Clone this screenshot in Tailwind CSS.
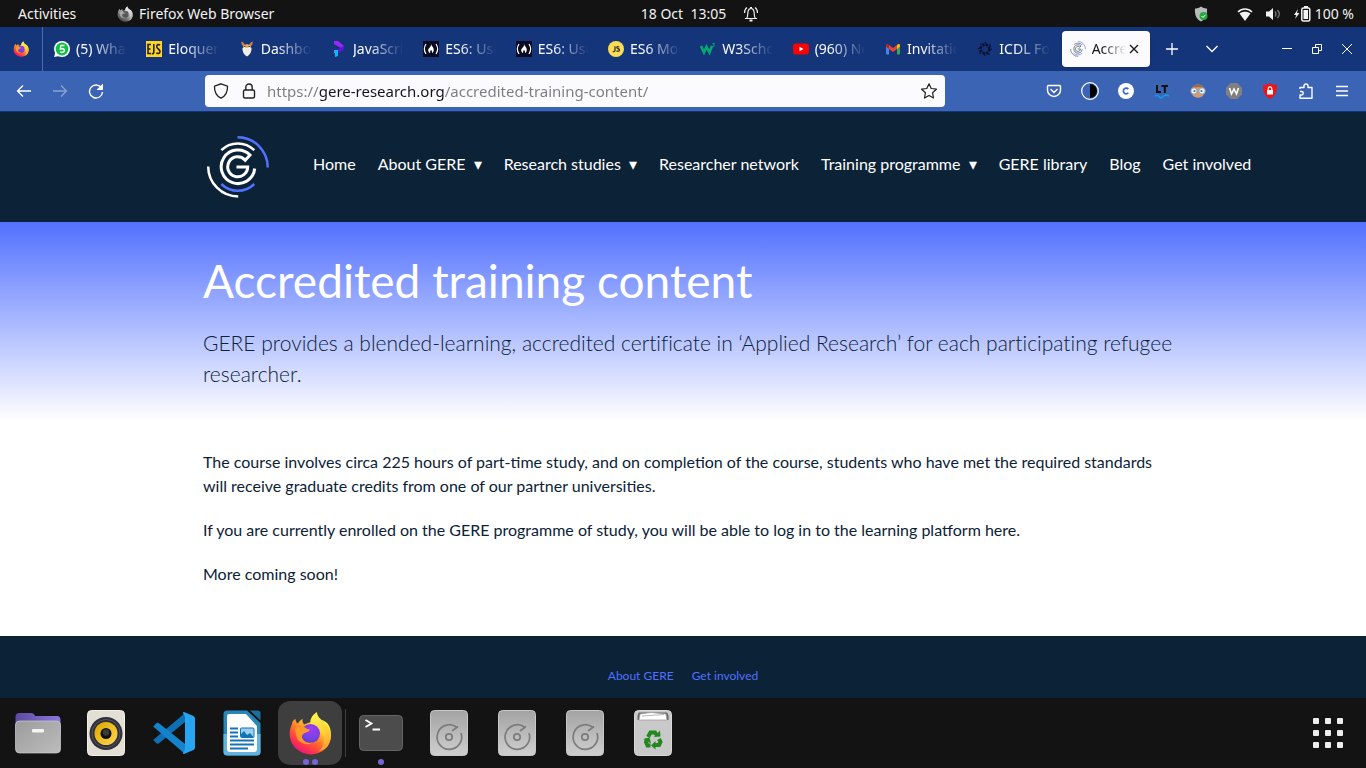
<!DOCTYPE html>
<html lang="en">
<head>
<meta charset="utf-8">
<title>Accredited training content</title>
<script src="https://cdn.jsdelivr.net/npm/@tailwindcss/browser@4"></script>
</head>
<body class="flex min-h-screen flex-col overflow-x-hidden bg-white font-['Noto_Sans',sans-serif]">

<svg class="absolute size-0" aria-hidden="true">
  <defs>
    <linearGradient id="ffBody" x1=".85" y1=".1" x2=".2" y2=".95"><stop offset="0" stop-color="#fff44f"/><stop offset=".3" stop-color="#ffb52e"/><stop offset=".55" stop-color="#ff6a2c"/><stop offset=".8" stop-color="#ff2f4e"/><stop offset="1" stop-color="#e31587"/></linearGradient>
    <linearGradient id="ffTail" x1=".4" y1="0" x2=".6" y2="1"><stop offset="0" stop-color="#fff44f"/><stop offset=".5" stop-color="#ffd338"/><stop offset="1" stop-color="#ff9a2e"/></linearGradient>
    <radialGradient id="ffGlobe" cx=".55" cy=".3" r=".8"><stop offset="0" stop-color="#a43bf0"/><stop offset=".6" stop-color="#7542e5"/><stop offset="1" stop-color="#5b3bbd"/></radialGradient>
    <linearGradient id="drive" x1="0" y1="0" x2="0" y2="1"><stop offset="0" stop-color="#a3a3a3"/><stop offset="1" stop-color="#cfcfcf"/></linearGradient>
    <linearGradient id="folderBack" x1="0" y1="0" x2="1" y2="0"><stop offset="0" stop-color="#5d4aa0"/><stop offset="1" stop-color="#8c78dc"/></linearGradient>
    <linearGradient id="folderFront" x1="0" y1="0" x2="1" y2="1"><stop offset="0" stop-color="#9c9c9c"/><stop offset="1" stop-color="#bcbcbc"/></linearGradient>
    <linearGradient id="cone" x1="0" y1="0" x2="1" y2="1"><stop offset="0" stop-color="#d9a400"/><stop offset=".5" stop-color="#efc023"/><stop offset="1" stop-color="#ffd65a"/></linearGradient>
  </defs>
  <symbol id="firefox" viewBox="0 0 44 44">
    <path fill="url(#ffBody)" d="M4 13C4 10.500 5.500 9 7.500 8c0 2 .8 3.500 2.500 4.500 1-2 2.500-3.500 4.500-4.500-.3 2 .3 4 1.500 5.500L28 9c7-1 12 2 14 8 2.500 8 .5 15.500-5 21-8 7.500-21 7-28.500 0C1 31 0 21 4 13z"/>
    <path fill="url(#ffTail)" d="M29 1c0 4 3 6.500 6.500 9.500 8 7 9.500 17 4 25-2 2.500-6 4.500-9 5 5-4 6.500-10 4.500-15-2-6-7-8-11.500-11.500C20.500 10 24 4 29 1z"/>
    <circle cx="22.500" cy="22.500" r="9.500" fill="url(#ffGlobe)"/>
    <path fill="#ff9a2a" d="M7 17c4-1.500 7-1.500 9-1 2 1 3 2.500 6 2.500-.5 2-3.500 3-5.500 3.500-2 1.500-3 2.500-2.500 5 1.500 4 6 6 10.500 4.500C20 35 12 33 9 27c-1-3-2-7-2-10z"/>
  </symbol>
  <symbol id="drive-disk" viewBox="0 0 38 46">
    <rect x=".5" y=".5" width="37" height="45" rx="4" fill="url(#drive)" stroke="#c9c6c8"/>
    <g fill="none" stroke="#7c7c7c" stroke-width="1.700"><path d="M26.500 17a12.300 12.300 0 1 0 4.500 6M22 21l6-4.500"/><circle cx="19" cy="27" r="3.200"/></g>
  </symbol>
  <symbol id="fcc" viewBox="0 0 16 16"><path fill="#0a0a23" d="M0 0h16v16H0z"/><path d="M3 3Q-.3 8 3 13M13 3q3.300 5 0 10" fill="none" stroke="#fff" stroke-width="1.200"/><path fill="#fff" d="M8 3c.4 2 3 3.500 2.800 6-.2 2-1.300 3-1.800 3 .3-1.500-.5-3-1-3-.8.500-1 2-.8 3C6 12 4.800 10 5.300 8.500 5.700 7 8.300 6 8 3z"/></symbol>
  <symbol id="gere" viewBox="0 0 64 64">
    <g fill="none" stroke-width="2.500"><path stroke="#5271ff" d="M31.500 2.200A30 30 0 0 1 61.700 32.500M15.300 49a23.500 23.500 0 0 0 33 0"/><path stroke="currentColor" d="M2.200 31.500a30 30 0 0 0 30 30M15.300 15.200a23.500 23.500 0 0 1 33 0"/></g>
    <path fill="none" stroke="currentColor" stroke-width="3" d="M48.700 33.500A16.800 16.800 0 1 1 44 20l-4.800 5.200A10 10 0 1 0 41.700 32H30.500"/>
  </symbol>
</svg>

<!-- Desktop top bar -->
<div class="flex h-[27px] items-center bg-[#131313] text-sm text-[#f2f2f2]">
  <div class="flex flex-1 items-center pl-[18px]">
    <button class="w-[99px] text-left">Activities</button>
    <button class="flex items-center gap-[6px]"><svg class="size-4 grayscale"><use href="#firefox"/></svg>Firefox Web Browser</button>
  </div>
  <div class="flex items-center gap-[17px] pl-7">
    <button class="whitespace-pre">18 Oct  13:05</button>
    <button aria-label="Notifications"><svg class="size-4" viewBox="0 0 16 16" fill="none" stroke="#f2f2f2" stroke-width="1.200"><path d="M3.500 12.500c1.500-1 1-4 1.500-7C5.400 3.500 6.500 2.500 8 2.500s2.600 1 3 3c.5 3 0 6 1.500 7zM2 12.500h12M1.500 7c0-2.500 1-4.500 2.500-5.500M14.500 7c0-2.500-1-4.500-2.500-5.500M7 1.500h2"/><path d="M6.500 14.500h3" stroke-width="2"/></svg></button>
  </div>
  <div class="flex flex-1 items-center justify-end pr-3">
    <svg class="mr-7 size-4" viewBox="0 0 16 16"><path fill="#b9bdc0" d="M8 .5c2 1.500 4 2 6 2C14.500 8 13 13 8 15.500 3 13 1.500 8 2 2.500c2 0 4-.5 6-2z"/><circle cx="10.500" cy="10" r="4" fill="#28a745"/><path d="M8.500 10l1.500 1.500 2.500-2.700" stroke="#fff" fill="none"/></svg>
    <svg class="mr-3 size-4" viewBox="0 0 16 16"><path fill="#f2f2f2" d="M8 15L2.500 7.500C5.500 5 10.500 5 13.500 7.500z"/><path d="M1 6c4-4 10-4 14 0" fill="none" stroke="#f2f2f2" stroke-width="1.600"/></svg>
    <svg class="mr-3 size-4" viewBox="0 0 16 16"><path fill="#f2f2f2" d="M1 5.500h3L8 2v12l-4-3.500H1z"/><path d="M10 5.500q2 2.500 0 5M12.500 4q3.500 4 0 8" fill="none" stroke="#777" stroke-width="1.300"/></svg>
    <svg class="mr-1 h-4 w-[18px]" viewBox="0 0 18 16"><path fill="#f2f2f2" d="M5 3L1 9h2.300L2 13l4.500-6H4z"/><rect x="8.800" y="2" width="8" height="13" rx="1.500" fill="none" stroke="#f2f2f2" stroke-width="1.500"/><path fill="#f2f2f2" d="M11 0h4v2h-4zM10.500 4h4.500v9h-4.500z"/></svg>
    <span>100 %</span>
  </div>
</div>

<!-- Tab strip -->
<div class="flex h-11 items-center bg-[#15357b] text-sm text-[#fbfbfe]">
  <button class="flex h-11 w-[43px] items-center justify-center border-r border-[#506aa6]" aria-label="Firefox View"><svg class="size-4"><use href="#firefox"/></svg></button>
  <div class="grid min-w-0 flex-1 grid-cols-12 pl-px">
    <button class="flex h-9 items-center gap-[6px] px-[10px]"><svg class="size-4 shrink-0" viewBox="0 0 16 16"><circle cx="8" cy="8" r="8" fill="#fff"/><path fill="#fff" d="M0 16l1.500-5 4 4z"/><circle cx="8" cy="8" r="6.400" fill="#0fc143"/><path d="M10.500 4.500H6.800L6.400 8c3-.8 4.300.3 4 1.700-.3 1.800-2.900 2-4.400 1.300" fill="none" stroke="#fff" stroke-width="1.500"/></svg><span class="flex-1 overflow-hidden text-left whitespace-nowrap mask-r-from-30% mask-r-to-100%">(5) WhatsApp</span></button>
    <button class="flex h-9 items-center gap-[6px] px-[10px]"><svg class="size-4 shrink-0" viewBox="0 0 16 16"><path fill="#ffd42a" d="M0 0h16v16H0z"/><path d="M5 3.500H2v9h3M2 8h2.500M7.800 3v8.500q-.2 1.500-2 1M14 4.200c-1-1-3.300-.9-3.300 1.300C10.700 8 14 8 14 10.500c0 2.200-2.500 2.500-3.600 1.300" fill="none" stroke="#222" stroke-width="1.600"/></svg><span class="flex-1 overflow-hidden text-left whitespace-nowrap mask-r-from-30% mask-r-to-100%">Eloquent</span></button>
    <button class="flex h-9 items-center gap-[6px] px-[10px]"><svg class="size-4 shrink-0" viewBox="0 0 16 16"><path d="M4.500 5C2.500 4.500 2 2.500 2.500.5 4 1 5.500 2.500 6 4zM11.500 5c2-.5 2.500-2.500 2-4.500C12 1 10.500 2.500 10 4z" fill="#c88442"/><path fill="#e8a75b" d="M4 4.500L8 3l4 1.500-.5 4h-7z"/><path fill="#f1eee6" d="M3.500 7l2-1L8 7l2.500-1 2 1c.3 3.500-1.500 7-4.500 8.500C5 14 3.200 10.500 3.500 7z"/><path fill="#66422b" d="M5 5h1.500v1H5zM9.500 5H11v1H9.500z"/></svg><span class="flex-1 overflow-hidden text-left whitespace-nowrap mask-r-from-30% mask-r-to-100%">Dashboard</span></button>
    <button class="flex h-9 items-center gap-[6px] px-[10px]"><svg class="size-4 shrink-0" viewBox="0 0 16 16"><path fill="#9b28fa" d="M3 0h4l6 5-3 2-7-4z"/><path fill="#6512e0" d="M13 5v3l-5 4-5-1V9l5-1z"/><path fill="#12b5ee" d="M3 9h4v3H3zM4 12l3-1v4l-3 1z"/></svg><span class="flex-1 overflow-hidden text-left whitespace-nowrap mask-r-from-30% mask-r-to-100%">JavaScript</span></button>
    <button class="flex h-9 items-center gap-[6px] px-[10px]"><svg class="size-4 shrink-0"><use href="#fcc"/></svg><span class="flex-1 overflow-hidden text-left whitespace-nowrap mask-r-from-30% mask-r-to-100%">ES6: Use</span></button>
    <button class="flex h-9 items-center gap-[6px] px-[10px]"><svg class="size-4 shrink-0"><use href="#fcc"/></svg><span class="flex-1 overflow-hidden text-left whitespace-nowrap mask-r-from-30% mask-r-to-100%">ES6: Use</span></button>
    <button class="flex h-9 items-center gap-[6px] px-[10px]"><svg class="size-4 shrink-0" viewBox="0 0 16 16"><circle cx="8" cy="8" r="8" fill="#fbdc55"/><path d="M7 5.200v4.300q-.2 1.500-2.200.8M11.300 6q-2.500-1-2.500.4c0 1.400 2.700 1 2.700 2.600 0 1.500-2 1.500-3 .8" fill="none" stroke="#333" stroke-width="1.300"/></svg><span class="flex-1 overflow-hidden text-left whitespace-nowrap mask-r-from-30% mask-r-to-100%">ES6 Modules</span></button>
    <button class="flex h-9 items-center gap-[6px] px-[10px]"><svg class="size-4 shrink-0" viewBox="0 0 16 16" fill="none" stroke="#04aa6d"><path stroke-width="2.600" d="M1 5l3 6.500L6.500 6l3 5.500L12 5"/><path d="M12.500 2.500h2L13.500 4c1.500 0 1.300 2-.8 1.500"/></svg><span class="flex-1 overflow-hidden text-left whitespace-nowrap mask-r-from-30% mask-r-to-100%">W3Schools</span></button>
    <button class="flex h-9 items-center gap-[6px] px-[10px]"><svg class="size-4 shrink-0" viewBox="0 0 16 16"><rect y="2.500" width="16" height="11" rx="3" fill="red"/><path fill="#fff" d="M6.500 5.700v4.600l4-2.300z"/></svg><span class="flex-1 overflow-hidden text-left whitespace-nowrap mask-r-from-30% mask-r-to-100%">(960) New</span></button>
    <button class="flex h-9 items-center gap-[6px] px-[10px]"><svg class="size-4 shrink-0" viewBox="0 0 16 16"><path fill="#4285f4" d="M1 5l3 2v6.500H2q-1 0-1-1z"/><path fill="#34a853" d="M12 7l3-2v7.500q0 1-1 1h-2z"/><path fill="#fbbc04" d="M12 4c1.500-1.500 3-1 3 .5v1L12 8z"/><path fill="#ea4335" d="M4 4l4 3 4-3v4l-4 3-4-3z"/><path fill="#c5221f" d="M1 5.500v-1C1 3 2.500 2.500 4 4v4z"/></svg><span class="flex-1 overflow-hidden text-left whitespace-nowrap mask-r-from-30% mask-r-to-100%">Invitation</span></button>
    <button class="flex h-9 items-center gap-[6px] px-[10px]"><svg class="size-4 shrink-0" viewBox="0 0 16 16"><circle cx="8" cy="8" r="4.300" fill="none" stroke="#0b1230" stroke-width="2.400" stroke-dasharray="2.400 1"/><path d="M8 1l2 3M13 3v3.500M15 8l-3.500 1.500M13 13H9.500M8 15l-2-3.500M3 13V9.500M1 8l3.500-2M3 3h3.500" stroke="#0b1230" stroke-width="1.200"/></svg><span class="flex-1 overflow-hidden text-left whitespace-nowrap mask-r-from-30% mask-r-to-100%">ICDL Foundation</span></button>
    <div class="px-[2px]">
      <div class="flex h-9 items-center rounded bg-[#fbfbfe] px-2 text-[#15141a] shadow-sm">
        <svg class="mr-[6px] size-4 shrink-0 text-[#445366]"><use href="#gere"/></svg><span class="flex-1 overflow-hidden text-left whitespace-nowrap mask-r-from-30% mask-r-to-100%">Accredited</span>
        <button aria-label="Close tab"><svg class="size-4" viewBox="0 0 16 16"><path d="M4 4l8 8M12 4l-8 8" stroke="#15141a" stroke-width="1.300"/></svg></button>
      </div>
    </div>
  </div>
  <div class="flex items-center pr-1">
    <button class="grid h-9 w-[40px] place-items-center" aria-label="New tab"><svg class="size-4" viewBox="0 0 16 16"><path d="M8 2v12M2 8h12" stroke="#fff" stroke-width="1.300"/></svg></button>
    <button class="mr-10 grid h-9 w-[40px] place-items-center" aria-label="List all tabs"><svg class="size-4" viewBox="0 0 16 16"><path d="M2.500 5L8 10.500 13.500 5" fill="none" stroke="#fff" stroke-width="1.300"/></svg></button>
    <button class="grid h-9 w-[30px] place-items-center" aria-label="Minimize"><svg class="size-3" viewBox="0 0 12 12"><path d="M1 5.500h10" stroke="#fff"/></svg></button>
    <button class="grid h-9 w-[30px] place-items-center" aria-label="Restore"><svg class="size-3" viewBox="0 0 12 12" fill="none" stroke="#fff"><path d="M1.500 4.500h6v6h-6zM4.500 4V1.500h6v6H8"/></svg></button>
    <button class="grid h-9 w-[30px] place-items-center" aria-label="Close"><svg class="size-3" viewBox="0 0 12 12"><path d="M1 1l10 10M11 1L1 11" stroke="#fff"/></svg></button>
  </div>
</div>

<!-- Navigation toolbar -->
<div class="flex h-[41px] items-center border-b border-[#15357b] bg-[#3c64b4] px-[6px]">
  <button class="grid size-9 place-items-center" aria-label="Back"><svg class="size-4" viewBox="0 0 16 16" fill="none" stroke="#fff" stroke-width="1.300"><path d="M15 8H1.500M7 2.500L1.500 8 7 13.500"/></svg></button>
  <button class="grid size-9 place-items-center opacity-40" aria-label="Forward"><svg class="size-4" viewBox="0 0 16 16" fill="none" stroke="#fff" stroke-width="1.300"><path d="M1 8h13.500M9 2.500L14.500 8 9 13.500"/></svg></button>
  <button class="grid size-9 place-items-center" aria-label="Reload"><svg class="size-4" viewBox="0 0 16 16" fill="none" stroke="#fff" stroke-width="1.400"><path d="M13.500 5A6.500 6.500 0 1 0 14.500 9"/><path d="M14.500 1v5.500H9" fill="#fff" stroke-width="1"/></svg></button>
  <div class="mx-[91px] flex h-8 flex-1 items-center rounded bg-[#fbfbfe] px-2">
    <svg class="mr-3 size-4" viewBox="0 0 16 16" fill="none" stroke="#222" stroke-width="1.300"><path d="M8 .8l6.500 2.400c.2 5-1.500 9.500-6.500 12-5-2.500-6.700-7-6.500-12z"/></svg>
    <svg class="mr-[10px] size-4" viewBox="0 0 16 16" fill="none" stroke="#222" stroke-width="1.400"><rect x="2.500" y="7" width="11" height="8" rx="1.500"/><path d="M4.800 7V4.200a3.200 3.200 0 0 1 6.400 0V7"/></svg>
    <input class="min-w-0 flex-1 bg-[linear-gradient(90deg,#7b7b80_52px,#15141a_52px,#15141a_177px,#7b7b80_177px)] bg-clip-text text-[15px] text-transparent outline-none" type="text" aria-label="Address" value="https://gere-research.org/accredited-training-content/">
    <button aria-label="Bookmark this page"><svg class="size-4" viewBox="0 0 16 16" fill="none" stroke="#222" stroke-width="1.200" stroke-linejoin="round"><path d="M8 .8l2.200 4.700 5.200.7-3.800 3.600.9 5.200L8 12.500 3.500 15l.9-5.200L.6 6.200l5.200-.7z"/></svg></button>
  </div>
  <div class="flex">
    <button class="grid size-9 place-items-center" aria-label="Save to Pocket"><svg class="size-4" viewBox="0 0 16 16" fill="none" stroke="#fff" stroke-width="1.400"><path d="M2.500 2.500h11q1 0 1 1V7a6.500 6.500 0 0 1-13 0V3.500q0-1 1-1zM4.500 6L8 9.500 11.500 6"/></svg></button>
    <button class="grid size-9 place-items-center" aria-label="Dark mode"><svg class="size-[18px]" viewBox="0 0 18 18"><circle cx="9" cy="9" r="8.300" fill="none" stroke="#fff" stroke-width="1.200"/><path d="M9 2a7 7 0 0 1 0 14z"/></svg></button>
    <button class="grid size-9 place-items-center" aria-label="Clockify"><svg class="size-4" viewBox="0 0 16 16"><circle cx="8" cy="8" r="8" fill="#fff"/><path d="M10.300 6.200a2.800 2.800 0 1 0 0 3.600" fill="none" stroke="#3a68cc" stroke-width="1.700"/></svg></button>
    <button class="grid size-9 place-items-center" aria-label="LanguageTool"><svg class="size-4" viewBox="0 0 16 16" fill="none"><path d="M3 2v7h4M7.500 3H14M10.800 3v7M5 9V8" stroke="#111" stroke-width="2"/><path d="M1 13.500q2-2.500 4 0t4 0 6-.5" stroke="#1199ee" stroke-width="1.600"/></svg></button>
    <button class="grid size-9 place-items-center" aria-label="Owl"><svg class="size-4" viewBox="0 0 16 16"><path fill="#d69a72" d="M2 6c0-6 12-6 12 0v5c-2 5-10 5-12 0z"/><path fill="#9b6a48" d="M2 5.500c1-5.500 11-5.500 12 0-4-2-8-2-12 0z"/><circle cx="4" cy="8" r="3.200" fill="#e8f3f5" stroke="#99a"/><circle cx="12" cy="8" r="3.200" fill="#e8f3f5" stroke="#99a"/><circle cx="4.500" cy="8" r="1.100" fill="#37748d"/><circle cx="11.500" cy="8" r="1.100" fill="#37748d"/></svg></button>
    <button class="grid size-9 place-items-center" aria-label="W extension"><svg class="size-4" viewBox="0 0 16 16"><path fill="#808080" d="M4.700 0h6.600L16 4.700v6.600L11.300 16H4.700L0 11.300V4.700z"/><path d="M3.500 5l2 6L8 6l2.500 5 2-6" fill="none" stroke="#fff" stroke-width="1.600"/></svg></button>
    <button class="grid size-9 place-items-center" aria-label="Ad blocker"><svg class="size-4" viewBox="0 0 16 16"><path fill="#f01414" d="M8 0c2 1.500 4 2 7 2 .3 6-1.500 11-7 14C2.500 13 .7 8 1 2c3 0 5-.5 7-2z"/><rect x="5" y="7" width="6" height="4.500" fill="#fff"/><path d="M6.200 7V5.700a1.800 1.800 0 0 1 3.600 0V7" fill="none" stroke="#fff" stroke-width="1.200"/></svg></button>
    <button class="grid size-9 place-items-center" aria-label="Extensions"><svg class="size-4" viewBox="0 0 16 16" fill="none" stroke="#fff" stroke-width="1.400" stroke-linejoin="round"><path d="M2 6V4.500h4V3a2 2 0 0 1 4 0v1.500h4v10.700H2V12h1.500a1.700 1.700 0 0 0 0-3.500H2"/></svg></button>
    <button class="grid size-9 place-items-center" aria-label="Menu"><svg class="size-4" viewBox="0 0 16 16"><path d="M2 3.500h12M2 8h12M2 12.500h12" stroke="#fff" stroke-width="1.300"/></svg></button>
  </div>
</div>

<!-- Website -->
<div class="flex flex-1 flex-col font-['Lato',sans-serif] text-[#0c2237]">
  <header class="bg-[#0c2237] py-[23px]">
    <div class="mx-auto flex h-16 max-w-[960px] items-center">
      <a href="#" aria-label="GERE" class="ml-[3px] shrink-0 text-white"><svg class="size-16"><use href="#gere"/></svg></a>
      <nav class="ml-[43px] flex gap-[22px] pb-[6px] text-base whitespace-nowrap text-white">
        <a href="#">Home</a><a href="#">About GERE&nbsp; ▾</a><a href="#">Research studies&nbsp; ▾</a><a href="#">Researcher network</a><a href="#">Training programme&nbsp; ▾</a><a href="#">GERE library</a><a href="#">Blog</a><a href="#">Get involved</a>
      </nav>
    </div>
  </header>
  <section class="bg-linear-to-b/srgb from-[#5271ff] to-white pt-[29px] pb-8">
    <div class="mx-auto max-w-[960px]">
      <h1 class="text-[46px] leading-[60px] text-white">Accredited training content</h1>
      <p class="-mr-4 mt-4 text-[21px] leading-[31px] font-light [font-variant-ligatures:none]">GERE provides a blended-learning, accredited certificate in ‘Applied Research’ for each participating refugee researcher.</p>
    </div>
  </section>
  <main class="w-full flex-1">
    <div class="mx-auto flex max-w-[960px] flex-col gap-5 pt-[29px] pb-10 text-base leading-6">
      <p>The course involves circa 225 hours of part-time study, and on completion of the course, students who have met the required standards will receive graduate credits from one of our partner universities.</p>
      <p>If you are currently enrolled on the GERE programme of study, you will be able to log in to the learning platform here.</p>
      <p>More coming soon!</p>
    </div>
  </main>
  <footer class="flex h-[62px] justify-center gap-[18px] bg-[#0c2237] pt-8 text-xs text-[#5271ff]"><a href="#">About GERE</a><a href="#">Get involved</a></footer>
</div>

<!-- Dock -->
<div class="flex h-[70px] items-center gap-1 bg-[#131313] px-[6px]">
  <button class="grid size-16 place-items-center" aria-label="Files"><svg class="size-12" viewBox="0 0 48 48"><path fill="url(#folderBack)" d="M1.500 8q0-4 4-4h12q2 0 3 2l.5 1H43q3.500 0 3.500 4v15h-45z"/><rect x="1.500" y="12" width="45" height="32" rx="4" fill="url(#folderFront)" stroke="#cfcfcf" stroke-width=".7"/><rect x="18" y="20" width="12" height="3.500" rx="1" fill="#f4f4f4"/></svg></button>
  <button class="grid size-16 place-items-center" aria-label="Rhythmbox"><svg class="h-[46px] w-[38px]" viewBox="0 0 38 46"><rect x=".5" y=".5" width="37" height="45" rx="4" fill="#e3dfd4" stroke="#f3f0e8"/><circle cx="19" cy="23.500" r="16.500" fill="#30303a"/><circle cx="19" cy="23.500" r="14" fill="none" stroke="#55555f"/><circle cx="19" cy="23.500" r="11.500" fill="url(#cone)"/><circle cx="19" cy="23.500" r="5.500" fill="#111"/><circle cx="19" cy="22.500" r="3.300" fill="#3a3a3a"/></svg></button>
  <button class="grid size-16 place-items-center" aria-label="Visual Studio Code"><svg class="size-11" viewBox="0 0 44 44"><path fill="#0f6fb3" d="M1.200 29l3.500 3.500q1 .5 2 0L33 11V2L1.200 29z"/><path fill="#1583cb" d="M1.200 15.500l3.500-3.500q1-.5 2 0L33 33v10L1.200 15.500z"/><path fill="#27a4f2" d="M32 1l9.500 4q1.500 1 1.500 2.500v29q0 1.500-1.500 2.500L32 43q-1 .3-1-1l2-4V6l-2-4q0-1.300 1-1z"/></svg></button>
  <button class="grid size-16 place-items-center" aria-label="LibreOffice Writer"><svg class="h-[46px] w-[38px]" viewBox="0 0 38 46"><path fill="#2886b9" d="M4 .5h20L37.500 13v29q0 3.500-4 3.500h-29Q.5 45.500.5 42V4Q.5.500 4 .5z"/><path fill="#63b4dc" d="M.5 24h37v18q0 3.500-4 3.500h-29q-4 0-4-3.500z"/><path fill="#1a6f9e" d="M27 .5h8q2.500 0 2.500 2.500v7.500z"/><path fill="#fff" d="M6 4h17l11 12v23q0 3-3 3H7q-3 0-3-3V6q0-2 2-2z"/><path d="M7 18.500h8M7 22.500h8M7 26.500h8M7 30.500h24M7 34.500h24M7 38.500h18" stroke="#1573b1" stroke-width="2"/><rect x="17.500" y="18" width="13.500" height="9.500" rx="1" fill="#9bd0ee" stroke="#1573b1"/><path fill="#1573b1" d="M18 27v-3l3-3 3 4 3-2 3.500 4z"/></svg></button>
  <button class="relative grid size-16 place-items-center rounded-xl bg-[#3e3e3e]" aria-label="Firefox"><svg class="size-11"><use href="#firefox"/></svg><span class="absolute bottom-0 flex gap-[3px]"><i class="size-[6px] rounded-full bg-[#7764d8]"></i><i class="size-[6px] rounded-full bg-[#7764d8]"></i></span></button>
  <div class="-mx-px h-12 w-px bg-[#3e3e3e]"></div>
  <button class="relative grid size-16 place-items-center" aria-label="Terminal"><svg class="h-9 w-11" viewBox="0 0 44 36"><rect x=".5" y=".5" width="43" height="35" rx="4" fill="#4c4c4c" stroke="#656565"/><path d="M6.500 5l6 3.500-6 3.500M13.500 14.500H21" fill="none" stroke="#fff" stroke-width="1.800"/></svg><span class="absolute bottom-0 size-[6px] rounded-full bg-[#7764d8]"></span></button>
  <button class="grid size-16 place-items-center" aria-label="Drive 1"><svg class="h-[46px] w-[38px]"><use href="#drive-disk"/></svg></button>
  <button class="grid size-16 place-items-center" aria-label="Drive 2"><svg class="h-[46px] w-[38px]"><use href="#drive-disk"/></svg></button>
  <button class="grid size-16 place-items-center" aria-label="Drive 3"><svg class="h-[46px] w-[38px]"><use href="#drive-disk"/></svg></button>
  <button class="grid size-16 place-items-center" aria-label="Trash"><svg class="h-[46px] w-[38px]" viewBox="0 0 38 46"><rect x=".5" y=".5" width="37" height="45" rx="4" fill="#c9c9c9" stroke="#d8d8d8"/><path fill="#666" d="M5 2.500h28q2 2 1.500 7.500h-31Q3 4.500 5 2.500z"/><path fill="#fff" stroke="#999" stroke-width=".7" d="M6 4l11-1.500L32 4l1 6H5z"/><path fill="none" stroke="#999" stroke-width=".7" d="M8 6l22-1.500"/>
    <g fill="none" stroke="#25871f" stroke-width="4"><path d="M14 27l2.500-4.500h4.500l2 3M25 29l1.500 3-1.500 3h-4M16.500 35.500h-3L12 32l1-3"/></g><path fill="#25871f" d="M20 27l6.500-.5-.5-6zM21.500 31v8.500l-4.500-4zM9.500 29l6-1.500 1.500 6z"/></svg></button>
  <button class="ml-auto grid size-16 place-items-center" aria-label="Show applications"><span class="grid grid-cols-3 gap-[6px]"><i class="size-[6px] rounded-[1px] bg-[#ededed]"></i><i class="size-[6px] rounded-[1px] bg-[#ededed]"></i><i class="size-[6px] rounded-[1px] bg-[#ededed]"></i><i class="size-[6px] rounded-[1px] bg-[#ededed]"></i><i class="size-[6px] rounded-[1px] bg-[#ededed]"></i><i class="size-[6px] rounded-[1px] bg-[#ededed]"></i><i class="size-[6px] rounded-[1px] bg-[#ededed]"></i><i class="size-[6px] rounded-[1px] bg-[#ededed]"></i><i class="size-[6px] rounded-[1px] bg-[#ededed]"></i></span></button>
</div>
</body>
</html>
